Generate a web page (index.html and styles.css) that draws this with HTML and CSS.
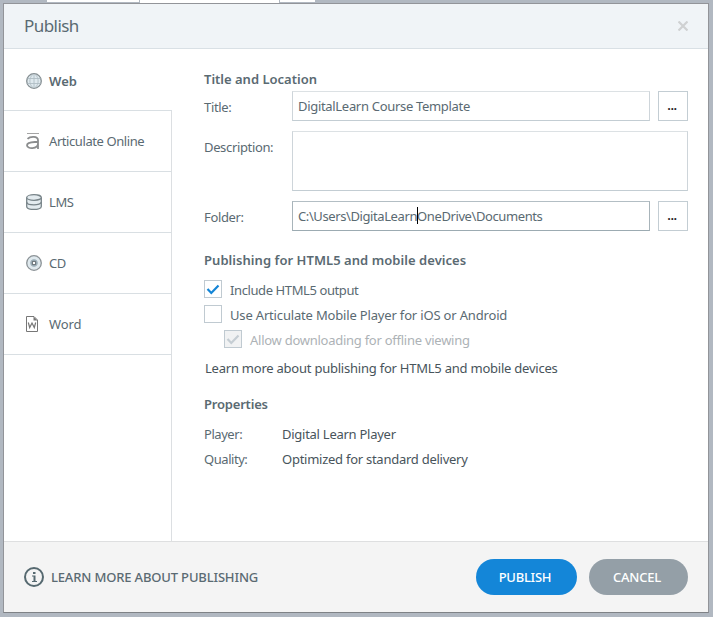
FILE: index.html
```html
<!DOCTYPE html>
<html lang="en">
<head>
<meta charset="utf-8">
<title>Publish</title>
<link rel="stylesheet" href="styles.css">
</head>
<body>
<div class="backdrop"><i class="strip strip-a"></i><i class="strip strip-b"></i><i class="strip strip-c"></i></div>
<div class="dialog">
  <header class="header">
    <h1>Publish</h1>
    <svg class="close" width="10" height="10" viewBox="0 0 10 10"><path d="M.5.5l9 9M9.500.5l-9 9"/></svg>
  </header>
  <div class="body">
    <nav class="tabs">
      <div class="tab active">
        <svg class="icon" width="16" height="16" viewBox="0 0 16 16"><circle cx="8" cy="8" r="7.3" fill="#dfe9ee" stroke="#858e92" stroke-width="1.3"/><path d="M8 1.500v13M1.500 5.500h13M1.500 10.500h13M6.500 1.800C3 5 3 11 6.500 14.200M9.500 1.800c3.500 3.200 3.500 9.200 0 12.400" fill="none" stroke="#b0bdc4" stroke-width=".9"/></svg>
        <span>Web</span>
      </div>
      <div class="tab">
        <svg class="icon" width="16" height="16" viewBox="0 0 16 16"><path d="M1 .5h12" stroke="#a4a4a4" fill="none"/><path d="M1.500 5.800C4 3.200 12 2.700 12 7.200V16M12 8.800C8 9.300 1 8.500 1 12.200c0 4.200 11 4 11-1.700" fill="none" stroke="#8b8d8e" stroke-width="1.800"/></svg>
        <span>Articulate Online</span>
      </div>
      <div class="tab">
        <svg class="icon" width="16" height="16" viewBox="0 0 16 16"><path d="M.7 3.500v9c0 4 14.600 4 14.600 0v-9" fill="#e3ebef" stroke="#788489" stroke-width="1.300"/><ellipse cx="8" cy="3.500" rx="7.300" ry="2.800" fill="#e3ebef" stroke="#788489" stroke-width="1.300"/><path d="M.7 8c0 3.800 14.600 3.800 14.600 0" fill="none" stroke="#788489" stroke-width="1.300"/></svg>
        <span>LMS</span>
      </div>
      <div class="tab">
        <svg class="icon" width="16" height="16" viewBox="0 0 16 16"><circle cx="8" cy="8" r="7.300" fill="#dfe9ee" stroke="#8b9296" stroke-width="1.300"/><circle cx="8" cy="8" r="3.400" fill="#8da1ac" stroke="#a9bac3"/><rect x="6.500" y="6.500" width="3" height="3" fill="#fff" stroke="#727b80"/></svg>
        <span>CD</span>
      </div>
      <div class="tab">
        <svg class="icon" width="16" height="16" viewBox="0 0 16 16"><path d="M.5.5h7.500L11.500 4v11.500H.5z" fill="#fff" stroke="#777"/><path d="M7.500.500V4.500h4z" fill="#777"/><path d="M2.300 6.500l1.400 5L6 7l2.300 4.500 1.400-5" fill="none" stroke="#777" stroke-width="1.200"/></svg>
        <span>Word</span>
      </div>
      <div class="tab-fill"></div>
    </nav>
    <main class="content">
      <h2>Title and Location</h2>
      <div class="field">
        <label>Title:</label><div class="input t-title"><span>DigitalLearn Course Template</span></div><button class="browse">...</button>
      </div>
      <div class="field tall">
        <label>Description:</label><div class="input"></div>
      </div>
      <div class="field">
        <label>Folder:</label><div class="input focused t-path"><span>C:\Users\DigitaLearn<i class="caret"></i>OneDrive\Documents</span></div><button class="browse">...</button>
      </div>
      <h2 class="section">Publishing for HTML5 and mobile devices</h2>
      <div class="check include">
        <span class="box"><svg width="16" height="16" viewBox="0 0 16 16"><path d="M2.500 8l3.800 4L13.500 4.500"/></svg></span><span class="caption">Include HTML5 output</span>
      </div>
      <div class="check"><span class="box"></span><span class="caption">Use Articulate Mobile Player for iOS or Android</span></div>
      <div class="check disabled">
        <span class="box"><svg width="16" height="16" viewBox="0 0 16 16"><path d="M2.500 8l3.800 4L13.500 4.500"/></svg></span><span class="caption">Allow downloading for offline viewing</span>
      </div>
      <p class="more"><span>Learn more about publishing for HTML5 and mobile devices</span></p>
      <h2 class="props-title">Properties</h2>
      <dl class="props">
        <dt>Player:</dt><dd>Digital Learn Player</dd>
        <dt>Quality:</dt><dd>Optimized for standard delivery</dd>
      </dl>
    </main>
  </div>
  <footer class="footer">
    <svg width="20" height="20" viewBox="0 0 20 20"><circle cx="10" cy="10" r="9" fill="none" stroke="#566970" stroke-width="2"/><path d="M9 5h2.500v2H9zM8 8.500h3.500V14H13v1H8v-1h1.500V9.500H8z" fill="#566970"/></svg>
    <span class="learn">LEARN MORE ABOUT PUBLISHING</span>
    <button class="pill primary">PUBLISH</button>
    <button class="pill">CANCEL</button>
  </footer>
</div>
</body>
</html>
```
FILE: styles.css
```css
* { box-sizing: border-box; }
body {
  margin: 0;
  width: 713px;
  height: 617px;
  overflow: hidden;
  padding: 3px 4px 4px 3px;
  background: #b1b8c1;
  font: 13px/20px "Noto Sans", "Open Sans", sans-serif;
  color: #5a6a72;
}
.backdrop { position: absolute; top: 0; left: 0; width: 713px; height: 2px; }
.strip { position: absolute; top: 0; height: 2px; background: #fff; }
.strip-a { left: 47px; width: 92px; }
.strip-b { left: 140px; width: 139px; height: 3px; }
.strip-c { left: 280px; width: 35px; }
.dialog {
  position: relative;
  width: 706px;
  height: 610px;
  border: 1px solid #929499;
  border-bottom-color: #7f8286;
  background: #fff;
  display: flex;
  flex-direction: column;
}
.header {
  height: 45px;
  flex: none;
  display: flex;
  align-items: center;
  justify-content: space-between;
  padding: 0 20px;
  background: #f0f4f7;
  border-bottom: 1px solid #d9e0e5;
}
h1 { margin: 0; font-size: 17px; line-height: 24px; font-weight: 400; letter-spacing: -0.55px; }
.close path { stroke: #cfd1d2; stroke-width: 2.2; }
.body { flex: 1; display: flex; }
.tabs { width: 168px; display: flex; flex-direction: column; letter-spacing: -0.42px; }
.tab {
  height: 61px;
  display: flex;
  align-items: center;
  padding-left: 22px;
  gap: 7px;
  border-bottom: 1px solid #d9dfe3;
  border-right: 1px solid #dcdfe2;
}
.tab.active { height: 62px; border-right: 0; font-weight: 600; padding-top: 2px; letter-spacing: 0; }
.tab-fill { flex: 1; border-right: 1px solid #dcdfe2; }
.tab:nth-child(5) { letter-spacing: -0.1px; }
.content { flex: 1; padding: 20px 20px 0 32px; letter-spacing: -0.26px; }
h2 { margin: 0; font-size: 13px; line-height: 20px; font-weight: 600; letter-spacing: 0; }
.field { display: flex; height: 30px; margin: 2px 0 10px; }
.field + .field { margin-top: 0; }
.field.tall { height: 60px; }
.field label { width: 88px; padding-top: 6px; letter-spacing: -0.35px; }
.input {
  flex: 1;
  padding: 4px 5px;
  border: 1px solid #d2d8dc;
  border-color: #dce1e4 #ced5da #c3cdd3 #ced5da;
}
.t-title { letter-spacing: -0.31px; }
.t-path { letter-spacing: -0.4px; }
.input.focused { border-color: #b3bec4 #a8b4ba #9cabb2 #a8b4ba; }
.caret { position: absolute; width: 1px; height: 17px; margin-top: 1px; background: #000; }
.browse {
  width: 30px;
  margin-left: 8px;
  padding: 0 2px 2px 0;
  border: 1px solid #c3cdd3;
  background: #fff;
  color: #222;
  font: 600 13px "Noto Sans", sans-serif;
  letter-spacing: -0.4px;
}
.section { margin: 19px 0 10px; letter-spacing: 0.05px; }
.props-title { letter-spacing: -0.2px; }
.check { height: 25px; display: flex; gap: 8px; letter-spacing: -0.17px; }
.check.include { letter-spacing: -0.4px; }
.box { width: 18px; height: 18px; border: 1px solid #c0cad1; }
.box svg { display: block; }
.box path { fill: none; stroke: #1485d6; stroke-width: 2.2; }
.check.disabled { padding-left: 20px; color: #adb2b6; letter-spacing: -0.26px; }
.disabled .box { background: #f1f2f3; }
.disabled path { stroke: #c5cdd3; }
.more { margin: 3px 0 16px 1px; color: #48545b; letter-spacing: -0.23px; }
.props { margin: 10px 0 0; display: grid; grid-template-columns: 78px 1fr; row-gap: 5px; }
.props dt { letter-spacing: -0.45px; }
.props dd { margin: 0; color: #48545b; }
.footer {
  height: 71px;
  flex: none;
  display: flex;
  align-items: center;
  padding: 0 20px;
  border-top: 1px solid #dedfe0;
  background: #f4f4f4;
}
.learn { margin: 0 auto 0 7px; font-weight: 500; letter-spacing: -0.16px; }
.pill {
  width: 99px;
  height: 36px;
  border: 0;
  padding: 0 3px 1px 0;
  border-radius: 18px;
  background: #949fa7;
  color: #fff;
  font: 500 13px "Noto Sans", sans-serif;
  letter-spacing: -0.25px;
}
.pill.primary { width: 101px; margin-right: 12px; background: #1486d8; }
```
